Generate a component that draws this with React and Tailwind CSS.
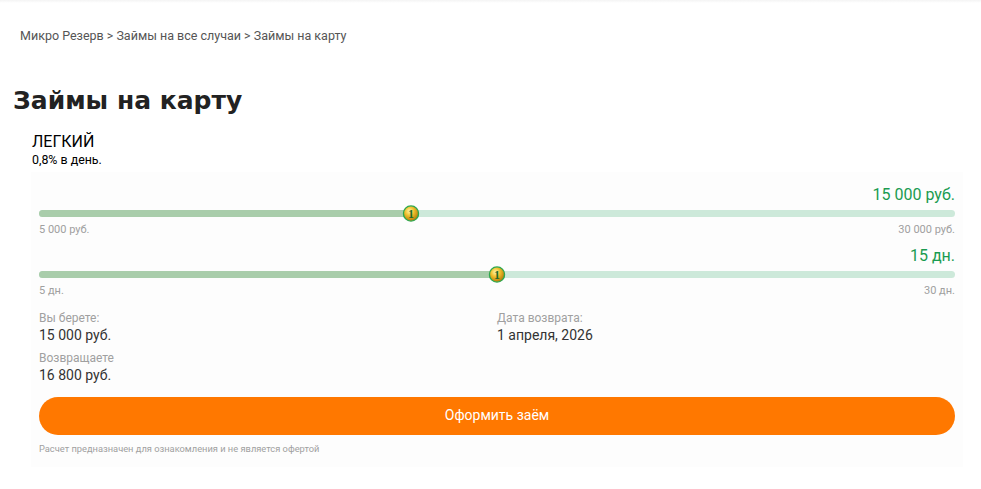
import React from "react";

function Coin() {
  return (
    <svg width="17" height="17" viewBox="0 0 17 17" className="block">
      <defs>
        <radialGradient id="gold" cx="40%" cy="35%" r="65%">
          <stop offset="0%" stopColor="#fff6a8" />
          <stop offset="45%" stopColor="#f1c12e" />
          <stop offset="100%" stopColor="#b57a08" />
        </radialGradient>
      </defs>
      <circle cx="8.5" cy="8.5" r="7.6" fill="url(#gold)" stroke="#2fa84f" strokeWidth="1.4" />
      <text x="8.5" y="12.6" textAnchor="middle" fontFamily="'Liberation Serif', serif" fontWeight="bold" fontSize="12" fill="#1f6b2a">1</text>
    </svg>
  );
}

function Slider({ value, min, max, pos }) {
  return (
    <div>
      <div className="text-right text-[16px] leading-5 text-[#1a9b50]">{value}</div>
      <div className="relative h-[18px] flex items-center">
        <div className="w-full h-[7px] rounded-full bg-[#cde9da] flex">
          <div className="h-full rounded-l-full bg-[#a9cdab]" style={{ width: pos }} />
        </div>
        <div className="absolute top-[0px] -translate-x-1/2" style={{ left: pos }}>
          <Coin />
        </div>
      </div>
      <div className="flex justify-between text-[11px] leading-4 text-[#a0a0a0] -mt-[1px]">
        <span>{min}</span>
        <span>{max}</span>
      </div>
    </div>
  );
}

export default function App() {
  return (
    <div className="min-h-[489px] bg-white font-['Roboto',sans-serif] relative">
      <div className="h-[3px] bg-gradient-to-b from-[#f4f4f4] to-white" />
      <div className="pl-[20px] pt-[24px] text-[12.5px] text-[#555]">
        Микро Резерв &gt; Займы на все случаи &gt; Займы на карту
      </div>
      <h1 className="pl-[13px] mt-[39px] text-[25px] leading-8 font-bold text-[#222] font-['DejaVu_Sans',sans-serif]">
        Займы на карту
      </h1>
      <div className="pl-[32px] mt-[15px]">
        <div className="text-[16px] leading-5 text-black">ЛЕГКИЙ</div>
        <div className="text-[12.4px] leading-4 text-black">0,8% в день.</div>
      </div>
      <div className="ml-[31px] mr-[18px] mt-[4px] bg-[#fdfdfd] px-[8px] pt-[13px] pb-[12px]">
        <Slider value="15 000 руб." min="5 000 руб." max="30 000 руб." pos="40.6%" />
        <div className="mt-[8px]">
          <Slider value="15 дн." min="5 дн." max="30 дн." pos="50%" />
        </div>
        <div className="grid grid-cols-2 mt-[11px]">
          <div>
            <div className="text-[12px] leading-4 text-[#a0a0a0]">Вы берете:</div>
            <div className="text-[14px] leading-[18px] text-[#333]">15 000 руб.</div>
          </div>
          <div>
            <div className="text-[12px] leading-4 text-[#a0a0a0]">Дата возврата:</div>
            <div className="text-[14px] leading-[18px] text-[#333]">1 апреля, 2026</div>
          </div>
          <div className="mt-[6px]">
            <div className="text-[12px] leading-4 text-[#a0a0a0]">Возвращаете</div>
            <div className="text-[14px] leading-[18px] text-[#333]">16 800 руб.</div>
          </div>
        </div>
        <button className="mt-[13px] w-full h-[38px] rounded-full bg-[#ff7800] text-white text-[14px]">
          Оформить заём
        </button>
        <div className="mt-[8px] text-[9.3px] leading-3 text-[#a0a0a0]">
          Расчет предназначен для ознакомления и не является офертой
        </div>
      </div>
    </div>
  );
}
